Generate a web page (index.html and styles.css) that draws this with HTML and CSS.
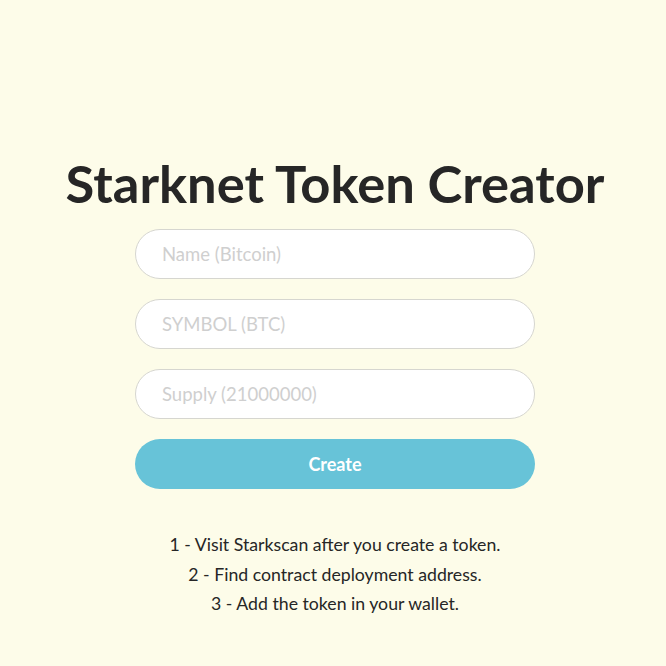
FILE: index.html
```
<!DOCTYPE html>
<html>
<head>
<meta charset="utf-8">
<link rel="stylesheet" href="styles.css">
</head>
<body>
<main class="page">
  <h1 class="title">Starknet Token Creator</h1>
  <form class="form">
    <input class="field" type="text" placeholder="Name (Bitcoin)">
    <input class="field" type="text" placeholder="SYMBOL (BTC)">
    <input class="field" type="text" placeholder="Supply (21000000)">
    <button class="btn" type="button">Create</button>
  </form>
  <div class="steps">
    <p>1 - Visit Starkscan after you create a token.</p>
    <p>2 - Find contract deployment address.</p>
    <p>3 - Add the token in your wallet.</p>
  </div>
</main>
</body>
</html>
```
FILE: styles.css
```
html, body {
  margin: 0;
  padding: 0;
  background: #fdfce9;
}
.page {
  box-sizing: border-box;
  width: 666px;
  height: 666px;
  padding-left: 4px;
  display: flex;
  flex-direction: column;
  align-items: center;
  font-family: "Lato", "Noto Sans", sans-serif;
  color: #262626;
}
.title {
  margin: 151px 0 0 0;
  font-size: 52.5px;
  line-height: 64px;
  font-weight: 700;
  letter-spacing: 0;
}
.form {
  margin-top: 14px;
  display: flex;
  flex-direction: column;
  gap: 20px;
  width: 400px;
}
.field {
  box-sizing: border-box;
  width: 400px;
  height: 50px;
  border: 1px solid #d6d6d0;
  border-radius: 25px;
  background: #ffffff;
  padding: 0 26px;
  font-family: "Lato", sans-serif;
  font-size: 18.5px;
  color: #262626;
  outline: none;
}
.field::placeholder {
  color: #cfcfcf;
}
.btn {
  height: 50px;
  border: none;
  border-radius: 25px;
  background: #67c3d8;
  color: #ffffff;
  font-family: "Lato", sans-serif;
  font-weight: 700;
  font-size: 18px;
}
.steps {
  margin-top: 41px;
  text-align: center;
  font-size: 17.7px;
  line-height: 29.5px;
}
.steps p {
  margin: 0;
}
```
